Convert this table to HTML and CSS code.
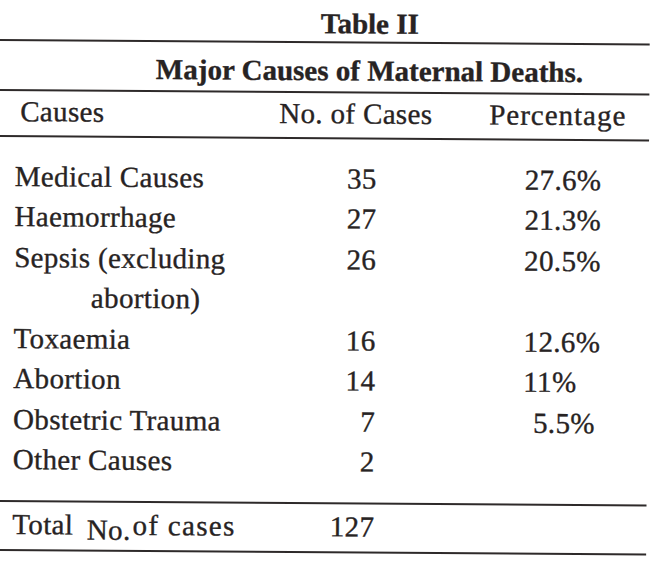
FILE: index.html
```html
<!DOCTYPE html>
<html>
<head>
<meta charset="utf-8">
<link rel="stylesheet" href="styles.css">
</head>
<body>
<div class="sheet">
  <div class="caption">Table II</div>
  <div class="title">Major Causes of Maternal Deaths.</div>
  <div class="head">
    <span class="h-cause">Causes</span>
    <span class="h-num">No. of Cases</span>
    <span class="h-pct">Percentage</span>
  </div>
  <div class="body">
    <div class="row"><span class="cause">Medical Causes</span><span class="num">35</span><span class="pct">27.6%</span></div>
    <div class="row"><span class="cause">Haemorrhage</span><span class="num">27</span><span class="pct">21.3%</span></div>
    <div class="row"><span class="cause">Sepsis (excluding<span class="wrap">abortion)</span></span><span class="num">26</span><span class="pct">20.5%</span></div>
    <div class="row"><span class="cause">Toxaemia</span><span class="num">16</span><span class="pct">12.6%</span></div>
    <div class="row"><span class="cause">Abortion</span><span class="num">14</span><span class="pct">11%</span></div>
    <div class="row"><span class="cause">Obstetric Trauma</span><span class="num">7</span><span class="pct pct-in">5.5%</span></div>
    <div class="row"><span class="cause">Other Causes</span><span class="num">2</span><span class="pct"></span></div>
  </div>
  <div class="total">
    <span class="cause">Total <span class="low">No.</span><span class="wide">of cases</span></span><span class="num">127</span><span class="pct"></span>
  </div>
</div>
</body>
</html>
```
FILE: styles.css
```css
html, body {
  margin: 0;
  padding: 0;
  background: #ffffff;
  overflow: hidden;
}
body {
  width: 650px;
  height: 572px;
  font-family: "Liberation Serif", "Times New Roman", serif;
  color: #272323;
}
.sheet {
  width: 650px;
  font-size: 29px;
  letter-spacing: 0.35px;
  -webkit-text-stroke: 0.35px #272323;
  transform: rotate(0.4deg);
  transform-origin: 0 0;
}
.caption,
.title {
  font-weight: bold;
  line-height: 28px;
  letter-spacing: 0;
  text-align: center;
  padding-left: 90px;
  border-bottom: 2px solid #2e2a2a;
}
.caption {
  padding-top: 7px;
  padding-bottom: 4px;
}
.title {
  padding-top: 13px;
  padding-bottom: 7px;
}
.head {
  display: flex;
  line-height: 28px;
  padding: 6px 0 10px 0;
  border-bottom: 2px solid #2e2a2a;
}
.h-cause {
  width: 280px;
  padding-left: 21px;
  box-sizing: border-box;
}
.h-num {
  width: 210px;
}
.h-pct {
  letter-spacing: 1px;
}
.body {
  padding: 18.5px 0 20.5px 0;
  border-bottom: 2px solid #2e2a2a;
}
.row,
.total {
  display: grid;
  grid-template-columns: 300px 78px 1fr;
}
.row {
  line-height: 40.5px;
}
.cause {
  padding-left: 16px;
}
.wrap {
  display: block;
  padding-left: 77px;
}
.num {
  text-align: right;
}
.pct {
  padding-left: 148px;
}
.pct-in {
  padding-left: 158px;
}
.total {
  line-height: 28px;
  padding: 8px 0 11px 0;
  border-bottom: 2px solid #2e2a2a;
}
.low {
  display: inline-block;
  line-height: 0;
  vertical-align: -5px;
  margin-left: 6px;
  margin-right: 2px;
}
.wide {
  letter-spacing: 1.3px;
}
```
